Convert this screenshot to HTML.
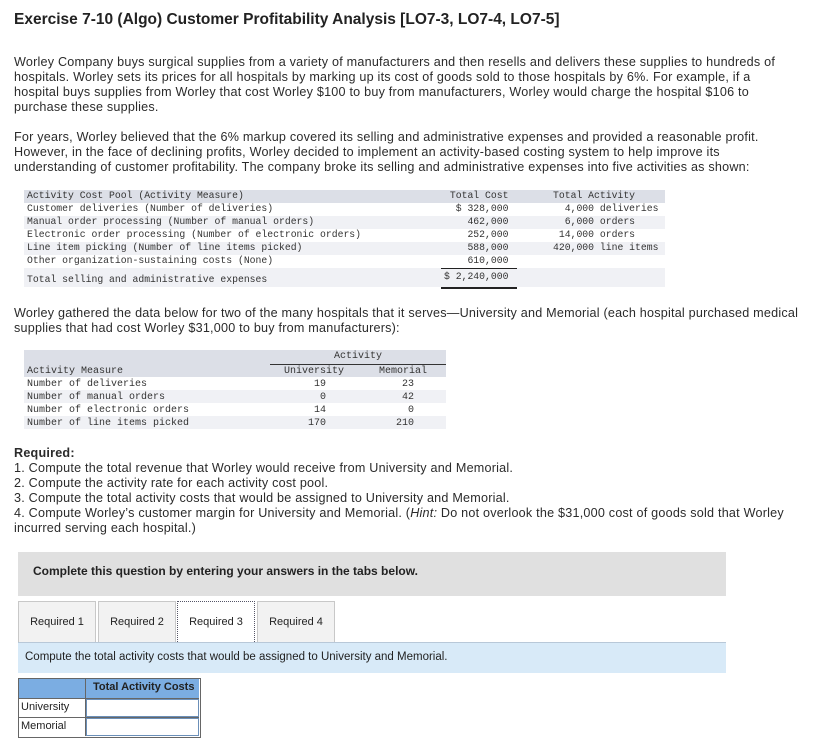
<!DOCTYPE html>
<html><head><style>
body{margin:0;width:814px;height:738px;background:#fff;position:relative;font-family:"Liberation Sans",sans-serif;color:#222;overflow:hidden}
.a{position:absolute;white-space:nowrap}
p{position:absolute;margin:0;left:14px;width:785px;font-size:12.6px;line-height:15px;color:#2b2b2b;letter-spacing:0.22px}
.m1{font-family:"Liberation Mono",monospace;font-size:10.5px;color:#333;transform:scaleX(0.93);transform-origin:0 0}
.m2{font-family:"Liberation Mono",monospace;font-size:10px;color:#333}
.r{text-align:right}
.tab{position:absolute;top:601px;height:40px;border:1px solid #c8c8c8;background:#f2f2f2;font-size:11px;line-height:40px;text-align:center;color:#222}
</style></head><body>
<div class="a" style="left:14px;top:11px;font-size:15.5px;font-weight:bold;color:#222">Exercise 7-10 (Algo) Customer Profitability Analysis [LO7-3, LO7-4, LO7-5]</div>
<p style="top:55px">Worley Company buys surgical supplies from a variety of manufacturers and then resells and delivers these supplies to hundreds of hospitals. Worley sets its prices for all hospitals by marking up its cost of goods sold to those hospitals by 6%. For example, if a hospital buys supplies from Worley that cost Worley $100 to buy from manufacturers, Worley would charge the hospital $106 to purchase these supplies.</p>
<p style="top:130px">For years, Worley believed that the 6% markup covered its selling and administrative expenses and provided a reasonable profit. However, in the face of declining profits, Worley decided to implement an activity-based costing system to help improve its understanding of customer profitability. The company broke its selling and administrative expenses into five activities as shown:</p>

<div class="a" style="left:24px;top:190px;width:641px;height:13px;background:#dcdfe7"></div>
<div class="a" style="left:24px;top:216px;width:641px;height:13px;background:#f0f1f5"></div>
<div class="a" style="left:24px;top:242px;width:641px;height:13px;background:#f0f1f5"></div>
<div class="a" style="left:24px;top:268px;width:641px;height:19px;background:#f0f1f5"></div>
<div class="a" style="left:441px;top:268px;width:76px;border-top:1px solid #222"></div>
<div class="a" style="left:441px;top:287px;width:76px;border-top:2px solid #222"></div>
<div class="a m1" style="left:27px;top:190px;line-height:13px">Activity Cost Pool (Activity Measure)<br>Customer deliveries (Number of deliveries)<br>Manual order processing (Number of manual orders)<br>Electronic order processing (Number of electronic orders)<br>Line item picking (Number of line items picked)<br>Other organization-sustaining costs (None)</div>
<div class="a m1" style="left:27px;top:274px">Total selling and administrative expenses</div>
<div class="a m1" style="left:444px;top:190px;line-height:13px;white-space:pre"> Total Cost
  $ 328,000
    462,000
    252,000
    588,000
    610,000</div>
<div class="a m1" style="left:444px;top:271px">$ 2,240,000</div>
<div class="a m1" style="left:553px;top:190px;line-height:13px;white-space:pre">Total Activity
  4,000 deliveries
  6,000 orders
 14,000 orders
420,000 line items</div>

<p style="top:306px">Worley gathered the data below for two of the many hospitals that it serves—University and Memorial (each hospital purchased medical supplies that had cost Worley $31,000 to buy from manufacturers):</p>

<div class="a" style="left:24px;top:350px;width:422px;height:27px;background:#dcdfe7"></div>
<div class="a" style="left:24px;top:390px;width:422px;height:13px;background:#f0f1f5"></div>
<div class="a" style="left:24px;top:416px;width:422px;height:13px;background:#f0f1f5"></div>
<div class="a" style="left:270px;top:364px;width:176px;border-top:1px solid #333"></div>
<div class="a m2" style="left:334px;top:351px">Activity</div>
<div class="a m2" style="left:27px;top:365px;line-height:13px">Activity Measure<br>Number of deliveries<br>Number of manual orders<br>Number of electronic orders<br>Number of line items picked</div>
<div class="a m2 r" style="left:270px;width:74px;top:365px;line-height:13px">University</div>
<div class="a m2 r" style="left:270px;width:56px;top:378px;line-height:13px">19<br>0<br>14<br>170</div>
<div class="a m2 r" style="left:370px;width:57px;top:365px;line-height:13px">Memorial</div>
<div class="a m2 r" style="left:370px;width:44px;top:378px;line-height:13px">23<br>42<br>0<br>210</div>

<p style="top:446px"><b>Required:</b><br>1. Compute the total revenue that Worley would receive from University and Memorial.<br>2. Compute the activity rate for each activity cost pool.<br>3. Compute the total activity costs that would be assigned to University and Memorial.<br>4. Compute Worley’s customer margin for University and Memorial. (<i>Hint:</i> Do not overlook the $31,000 cost of goods sold that Worley incurred serving each hospital.)</p>

<div class="a" style="left:18px;top:552px;width:708px;height:44px;background:#e0e0e0"></div>
<div class="a" style="left:33px;top:564px;font-size:12px;font-weight:bold;color:#222">Complete this question by entering your answers in the tabs below.</div>

<div class="tab" style="left:18px;width:76px">Required 1</div>
<div class="tab" style="left:98px;width:76px">Required 2</div>
<div class="tab" style="left:177px;width:76px;background:#fff;border:1px dotted #556;height:41px">Required 3</div>
<div class="tab" style="left:257px;width:76px">Required 4</div>
<div class="a" style="left:18px;top:642px;width:708px;height:30px;background:#d8eaf8;border-top:1px solid #b8c8d8"></div>
<div class="a" style="left:25px;top:651px;font-size:11.5px;color:#222">Compute the total activity costs that would be assigned to University and Memorial.</div>

<div class="a" style="left:18px;top:678px;width:181px;height:58px;border:1px solid #666"></div>
<div class="a" style="left:19px;top:679px;width:180px;height:19px;background:#7badE2"></div>
<div class="a" style="left:85px;top:679px;height:57px;border-left:1px solid #666"></div>
<div class="a" style="left:19px;top:698px;width:180px;border-top:1px solid #666"></div>
<div class="a" style="left:19px;top:717px;width:180px;border-top:1px solid #666"></div>
<div class="a" style="left:86px;top:699px;width:111px;height:16px;border:1px solid #6b8fb8"></div>
<div class="a" style="left:86px;top:718px;width:111px;height:16px;border:1px solid #6b8fb8"></div>
<div class="a" style="left:93px;top:681px;font-size:11px;font-weight:bold;color:#222">Total Activity Costs</div>
<div class="a" style="left:21px;top:701px;font-size:11px">University</div>
<div class="a" style="left:21px;top:720px;font-size:11px">Memorial</div>
</body></html>
